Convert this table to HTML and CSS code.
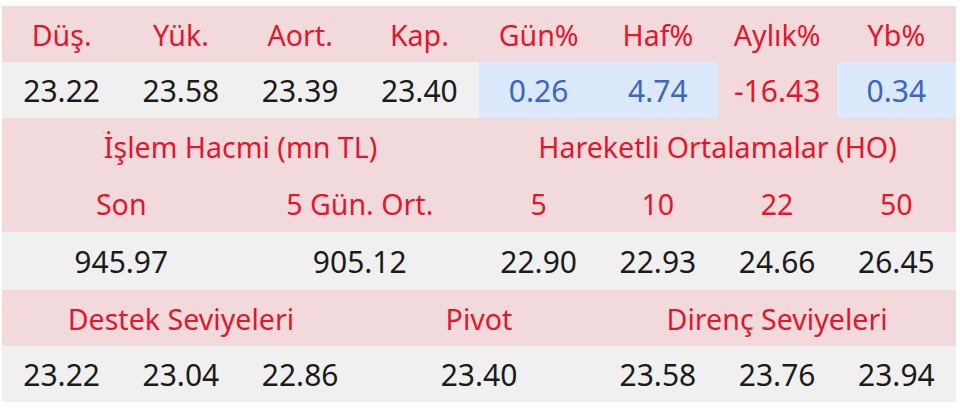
FILE: index.html
```html
<!DOCTYPE html>
<html lang="tr">
<head>
<meta charset="utf-8">
<link rel="stylesheet" href="styles.css">
</head>
<body>
<div class="board">
  <div class="cell head">Düş.</div>
  <div class="cell head">Yük.</div>
  <div class="cell head">Aort.</div>
  <div class="cell head">Kap.</div>
  <div class="cell head">Gün%</div>
  <div class="cell head">Haf%</div>
  <div class="cell head">Aylık%</div>
  <div class="cell head">Yb%</div>

  <div class="cell data">23.22</div>
  <div class="cell data">23.58</div>
  <div class="cell data">23.39</div>
  <div class="cell data">23.40</div>
  <div class="cell pos">0.26</div>
  <div class="cell pos">4.74</div>
  <div class="cell neg">-16.43</div>
  <div class="cell pos">0.34</div>

  <div class="cell head span4">İşlem Hacmi (mn TL)</div>
  <div class="cell head span4">Hareketli Ortalamalar (HO)</div>

  <div class="cell head span2">Son</div>
  <div class="cell head span2">5 Gün. Ort.</div>
  <div class="cell head">5</div>
  <div class="cell head">10</div>
  <div class="cell head">22</div>
  <div class="cell head">50</div>

  <div class="cell data span2">945.97</div>
  <div class="cell data span2">905.12</div>
  <div class="cell data">22.90</div>
  <div class="cell data">22.93</div>
  <div class="cell data">24.66</div>
  <div class="cell data">26.45</div>

  <div class="cell head span3">Destek Seviyeleri</div>
  <div class="cell head span2">Pivot</div>
  <div class="cell head span3">Direnç Seviyeleri</div>

  <div class="cell data">23.22</div>
  <div class="cell data">23.04</div>
  <div class="cell data">22.86</div>
  <div class="cell data span2">23.40</div>
  <div class="cell data">23.58</div>
  <div class="cell data">23.76</div>
  <div class="cell data">23.94</div>
</div>
</body>
</html>
```
FILE: styles.css
```css
html, body {
  margin: 0;
  padding: 0;
  background: #ffffff;
}

.board {
  margin: 6px 0 0 2px;
  width: 954px;
  display: grid;
  grid-template-columns: repeat(8, 1fr);
  grid-template-rows: 56px 56px 57px 57px 58px 56px 56px;
  font-family: "Noto Sans", "Open Sans", sans-serif;
  font-size: 28.6px;
}

.cell {
  display: flex;
  align-items: center;
  justify-content: center;
  white-space: nowrap;
}

.head {
  background: #f2d9dc;
  color: #e3162b;
}

.data {
  background: #f0f0f0;
  color: #1b1b1b;
  font-size: 30px;
}

.pos {
  background: #dce8fb;
  color: #3a66c4;
  font-size: 30px;
}

.neg {
  background: #f2d9dc;
  color: #e3162b;
  font-size: 30px;
}

.span2 { grid-column: span 2; }
.span3 { grid-column: span 3; }
.span4 { grid-column: span 4; }
```
